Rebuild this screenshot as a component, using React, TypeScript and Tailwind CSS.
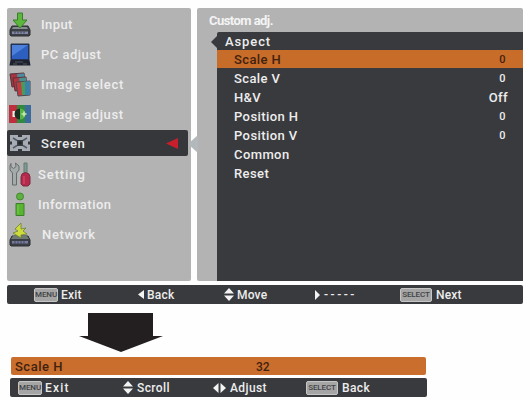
import type { ReactNode } from "react";

const InputIcon = () => (
  <svg width="22" height="25" viewBox="0 0 22 25">
    <path d="M3 14h16l2 4v5l-1 1H2l-1-1v-5z" fill="#3c4045" stroke="#2c2e32" />
    <path d="M4 15h14l1 2H3z" fill="#848c8f" />
    <path d="M3 19.5h16v2.500H3z" fill="#8286a8" />
    <path d="M6 19.5v2M9 19.5v2M12 19.5v2M15 19.5v2" stroke="#3c4045" />
    <path
      d="M8.500 1h5v7h4.500l-7 8L4 8h4.500z"
      fill="#5cb83a"
      stroke="#3a7d2d"
    />
  </svg>
);

const ComputerIcon = () => (
  <svg width="22" height="24" viewBox="0 0 22 24">
    <path d="M2 1h18v16H2z" fill="#20345e" stroke="#27334d" />
    <path d="M3 2h16v14H3z" fill="#2c5fc0" />
    <path d="M3 2h16L3 13z" fill="#4c80da" />
    <path d="M1.500 17h19l1 5.500H.5z" fill="#1d222c" />
    <path d="M6 19h8M4 21h4M14 21h4" stroke="#4e5765" />
  </svg>
);

const ImageSelectIcon = () => (
  <svg width="22" height="25" viewBox="0 0 22 25">
    <path d="M1 2l14-1 1 12-13 2z" fill="#a8343d" stroke="#50343d" />
    <path d="M8 2l7-.5.500 4-7 .5z" fill="#4f8c9e" />
    <path d="M4 6l13-1 1 13-12 1z" fill="#b3363e" stroke="#58333b" />
    <path d="M10 6l7-.5.500 4-7 .5z" fill="#4b8e8d" />
    <path d="M7 10l14-1v14l-12 1z" fill="#c23b40" stroke="#4d4650" />
    <path d="M12 10l4-.5V23h-3z" fill="#4c9a58" />
    <path d="M16 9.500l5-.5v14h-5z" fill="#3a80a8" />
  </svg>
);

const ImageAdjustIcon = () => (
  <svg width="22" height="18" viewBox="0 0 22 18">
    <path d="M0 0h8v18H0z" fill="#bd2f3c" />
    <path d="M8 0h8v18H8z" fill="#2f8a3e" />
    <path d="M16 0h6v18h-6z" fill="#3a6b9c" />
    <path d="M3.500 6h2.500v6H3.500z" fill="#f2e8e7" />
    <path d="M11 3.500a5.500 5.500 0 0 0 0 11z" fill="#1b2f20" />
    <path d="M11 3.500a5.500 5.500 0 0 1 0 11z" fill="#58b447" />
    <path d="M15 6.500v5M12.500 9h5" stroke="#c7edad" strokeWidth="1.500" />
  </svg>
);

const ScreenIcon = () => (
  <svg width="20" height="16" viewBox="0 0 20 16">
    <path d="M0 0h20v16H0z" fill="#a7acb4" />
    <path d="M7 5h6v6H7z" fill="#3a3f46" />
    <path
      d="M8 0h4v2H8zM8 14h4v2H8zM0 6.500h2v3H0zM18 6.500h2v3h-2z"
      fill="#35373a"
    />
    <path
      d="M3 3l4 2.500M3 13l4-2.500M17 3l-4 2.500M17 13l-4-2.500"
      stroke="#555b64"
      strokeWidth="1.500"
    />
    <path d="M8.500 6.500h3v3h-3z" fill="#22262b" />
  </svg>
);

const SettingIcon = () => (
  <svg width="22" height="25" viewBox="0 0 22 25">
    <path
      d="M2 1.500v3l2.500 2L7 4.500 6.500 1l3.500 3v4l-2.500 3v12h-4V11L1 8V4z"
      fill="#a3aaa9"
      stroke="#646d6e"
    />
    <path d="M15 1h3v12h-3z" fill="#819a94" stroke="#5f7a72" />
    <path
      d="M13 12q3.500-3 7 0l1 3v7l-2 2h-5l-2-2v-7z"
      fill="#b5294c"
      stroke="#7b2a42"
    />
    <path d="M15 14v8" stroke="#d65470" />
  </svg>
);

const InfoIcon = () => (
  <svg width="12" height="25" viewBox="0 0 12 25">
    <circle cx="6" cy="4.500" r="3.500" fill="#5eb040" stroke="#43872f" />
    <path d="M2 11.500h8v12H2z" fill="#58b52f" stroke="#3d7f2f" />
    <path d="M4 13v9" stroke="#7fcd50" />
  </svg>
);

const NetworkIcon = () => (
  <svg width="22" height="25" viewBox="0 0 22 25">
    <path d="M3 14h16l2 4v5l-1 1H2l-1-1v-5z" fill="#3c4045" stroke="#2c2e32" />
    <path d="M4 14h14l2 3H2z" fill="#6f7a72" />
    <path d="M3 19h16v2.500H3z" fill="#767ba2" />
    <path d="M6 19v3M9 19v3M12 19v3M15 19v3" stroke="#484c58" />
    <path
      d="M12 1L6 7l3 2-5 2 8 5v-3l6-1-4-3 3-3-5 1z"
      fill="#cfdb3c"
      stroke="#6a8433"
      strokeWidth=".8"
    />
  </svg>
);

const menu = [
  { label: "Input", icon: <InputIcon />, text: "ml-[9px] tracking-[0.4px]" },
  { label: "PC adjust", icon: <ComputerIcon />, text: "ml-[9px] tracking-[0.5px]" },
  { label: "Image select", icon: <ImageSelectIcon />, text: "ml-[9px] tracking-[0.7px]" },
  { label: "Image adjust", icon: <ImageAdjustIcon />, text: "ml-[9px] tracking-[0.6px]" },
  { label: "Screen", icon: <ScreenIcon />, text: "ml-[9px] tracking-[0.7px]" },
  { label: "Setting", icon: <SettingIcon />, text: "ml-[6px] tracking-[0.9px]" },
  { label: "Information", icon: <InfoIcon />, text: "ml-[6px] tracking-[0.5px]" },
  { label: "Network", icon: <NetworkIcon />, text: "ml-[10px] tracking-[0.7px]" },
];

const options = [
  { label: "Scale H", value: "0" },
  { label: "Scale V", value: "0" },
  { label: "H&V", value: "Off" },
  { label: "Position H", value: "0" },
  { label: "Position V", value: "0" },
  { label: "Common", value: "" },
  { label: "Reset", value: "" },
];

const UpDown = () => (
  <svg width="10" height="13" viewBox="0 0 10 13" fill="#f3f3f3">
    <path d="M5 0l5 5.500H0zM5 13l5-5.500H0z" />
  </svg>
);

const LeftRight = () => (
  <svg width="13" height="10" viewBox="0 0 13 10" fill="#f3f3f3">
    <path d="M0 5l5.500-5v10zM13 5L7.500 0v10z" />
  </svg>
);

const Key = ({ children, width }: { children: string; width: string }) => (
  <span
    className={`${width} flex h-[14px] items-center justify-center rounded-xs border border-[#c5c5c5] bg-[#a5a5a5] text-[8px] leading-none font-medium tracking-[-0.1px] text-[#424346]`}
  >
    {children}
  </span>
);

const Hint = ({
  icon,
  label,
  className,
}: {
  icon: ReactNode;
  label: string;
  className: string;
}) => (
  <div className={`flex shrink-0 items-center whitespace-pre ${className}`}>
    {icon}
    <span>{label}</span>
  </div>
);

export default function App() {
  return (
    <div className="h-[400px] w-[529px] overflow-hidden bg-[#fefefe] pt-2 pl-[7px] font-['Roboto',sans-serif] text-[13px] leading-none font-medium text-[#ededed]">
      <div className="flex h-[273px] w-[516px] gap-[6px]">
        <div className="w-[184px] rounded-xs bg-[#b3b3b3] pt-[2px]">
          {menu.map((item) => (
            <div
              key={item.label}
              className={`flex items-center ${
                item.label === "Screen"
                  ? "mt-[0.800px] mb-1 h-[26px] w-[181px] rounded-xs bg-[#35373a] pt-px"
                  : "h-[29.800px]"
              }`}
            >
              <span className="ml-px flex w-6 justify-center">{item.icon}</span>
              <span className={item.text}>{item.label}</span>
              {item.label === "Screen" && (
                <svg
                  className="mr-[10px] ml-auto"
                  width="12"
                  height="11"
                  viewBox="0 0 12 11"
                >
                  <path d="M0 5.500L12 0v11z" fill="#c91f2d" />
                </svg>
              )}
            </div>
          ))}
        </div>
        <div className="relative flex w-[326px] flex-col rounded-xs bg-[#b3b3b3]">
          <svg
            className="absolute top-[127px] -left-[9px]"
            width="10"
            height="18"
            viewBox="0 0 10 18"
          >
            <path d="M0 9L10 0v18z" fill="#b3b9bb" />
          </svg>
          <p className="h-6 pt-[6px] pl-3 text-[13px] font-bold tracking-[-0.550px] text-[#f4f4f4]">
            Custom adj.
          </p>
          <div className="relative ml-5 flex-1 rounded-tl-xs bg-[#393a3d]">
            <svg
              className="absolute top-[3px] -left-[6px]"
              width="7"
              height="14"
              viewBox="0 0 7 14"
            >
              <path d="M0 7l7-7v14z" fill="#393a3d" />
            </svg>
            <p className="flex h-[18px] items-center pl-2 tracking-[0.9px]">
              Aspect
            </p>
            {options.map((option, i) => (
              <div
                key={option.label}
                className={`flex items-center justify-between pl-[17px] tracking-[0.4px] ${
                  i === 0
                    ? "mb-px h-[18px] bg-[#c76c29] pt-px text-[#42210f]"
                    : "h-[19px]"
                }`}
              >
                <span>{option.label}</span>
                {option.value === "Off" ? (
                  <span className="mr-[15px]">Off</span>
                ) : (
                  <span className="mr-[17px] text-[11px]">{option.value}</span>
                )}
              </div>
            ))}
          </div>
        </div>
      </div>
      <div className="mt-1 flex h-[19px] w-[516px] items-center rounded-xs bg-[#393a3d] text-[12px] tracking-[0.2px]">
        <Hint
          className="ml-[27px] w-[104px] gap-[3px]"
          icon={<Key width="w-6">MENU</Key>}
          label="Exit"
        />
        <Hint
          className="w-[86px] gap-[3px]"
          icon={
            <svg width="6" height="9" viewBox="0 0 6 9" fill="#f3f3f3">
              <path d="M0 4.500L6 0v9z" />
            </svg>
          }
          label="Back"
        />
        <Hint className="w-[91px] gap-[3px]" icon={<UpDown />} label="Move" />
        <Hint
          className="w-[85px] gap-1 tracking-[2.500px]"
          icon={
            <svg width="5" height="10" viewBox="0 0 5 10" fill="#f3f3f3">
              <path d="M0 0l5 5-5 5z" />
            </svg>
          }
          label="-----"
        />
        <Hint
          className="gap-1"
          icon={<Key width="w-8">SELECT</Key>}
          label="Next"
        />
      </div>
      <svg
        className="mt-[9px] ml-[72px]"
        width="84"
        height="39"
        viewBox="0 0 84 39"
      >
        <path d="M9 0h65v23h10L42 39 0 23h9z" fill="#231f20" />
      </svg>
      <div className="mt-[5px] ml-1 flex h-[18px] w-[415px] items-center rounded-xs bg-[#c96e2d] text-[#42210f]">
        <span className="ml-1 w-[241px] pt-px tracking-[0.5px]">Scale H</span>
        <span className="pt-px text-[12px]">32</span>
      </div>
      <div className="mt-[3px] ml-[3px] flex h-[19px] w-[417px] items-center rounded-xs bg-[#393a3d] text-[12px] tracking-[0.4px]">
        <Hint
          className="ml-2 w-[105px] gap-[3px] tracking-[1.200px]"
          icon={<Key width="w-6">MENU</Key>}
          label="Exit"
        />
        <Hint className="w-[90px] gap-1" icon={<UpDown />} label="Scroll" />
        <Hint className="w-[93px] gap-1" icon={<LeftRight />} label="Adjust" />
        <Hint
          className="gap-1"
          icon={<Key width="w-8">SELECT</Key>}
          label="Back"
        />
      </div>
    </div>
  );
}
